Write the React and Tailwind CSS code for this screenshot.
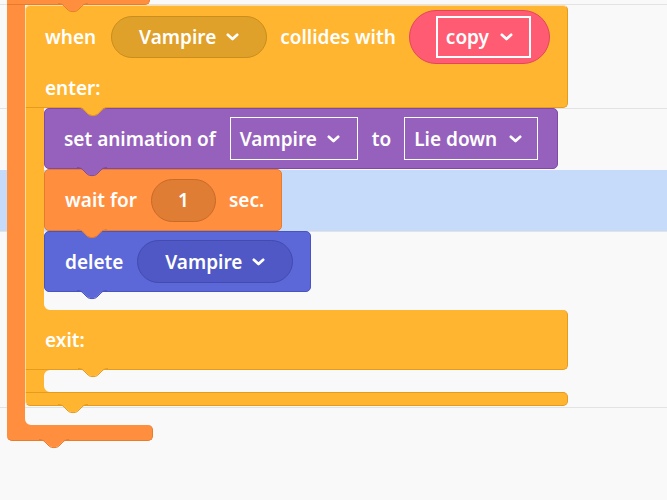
import React from "react";

const Y = "#ffb52f";
const O = "#ff8f3f";

function Chevron() {
  return (
    <svg width="13" height="8" viewBox="0 0 13 8" className="shrink-0">
      <polyline points="1.8,1.8 6.5,6 11.2,1.8" fill="none" stroke="white" strokeWidth="2.7" strokeLinecap="round" strokeLinejoin="round" />
    </svg>
  );
}

function Bump({ color, stroke, className }) {
  return (
    <svg width="30" height="10" viewBox="0 0 30 10" className={"absolute z-10 " + className}>
      <path d="M0 0 C4 0 5 1.5 8 4.5 L10.5 7 C12 8.5 18 8.5 19.5 7 L22 4.5 C25 1.5 26 0 30 0 Z" fill={color} />
      <path d="M0 0.5 C4 0.5 5 2 8 5 L10.5 7.5 C12 9 18 9 19.5 7.5 L22 5 C25 2 26 0.5 30 0.5" fill="none" stroke={stroke} strokeWidth="1" />
    </svg>
  );
}

function CornerBL({ color, className }) {
  return (
    <svg width="6" height="6" viewBox="0 0 6 6" className={"absolute " + className}>
      <path d="M0 0 L0 6 L6 6 A6 6 0 0 1 0 0 Z" fill={color} />
    </svg>
  );
}

function CornerTL({ color, className }) {
  return (
    <svg width="6" height="6" viewBox="0 0 6 6" className={"absolute " + className}>
      <path d="M0 0 L6 0 A6 6 0 0 0 0 6 Z" fill={color} />
    </svg>
  );
}

export default function App() {
  return (
    <div className="relative w-[667px] h-[500px] overflow-hidden bg-[#f9f9f9] font-['Noto_Sans','Open_Sans',sans-serif] text-white font-semibold text-[19px] leading-[24px]">
      {/* canvas rows */}
      <div className="flex flex-col">
        <div className="h-[4px]" />
        <div className="h-[104px] border-t border-[#e3e3e3]" />
        <div className="h-[62px] border-t border-[#e3e3e3]" />
        <div className="h-[61px] bg-[#c6dbf9]" />
        <div className="h-[176px] border-t border-[#e3e3e3]" />
        <div className="h-[93px] border-t border-[#e3e3e3]" />
      </div>

      {/* block stack */}
      <div className="absolute left-[7px] top-[-25px] flex flex-col items-start">
        {/* orange top arm */}
        <div className="relative w-[143px] h-[30px] bg-[#ff8f3f] rounded-br-[5px] border-r border-b border-[#e67d2e]">
          <Bump color={O} stroke="#e67d2e" className="left-[51px] top-full -mt-[1px]" />
        </div>

        <div className="flex">
          <div className="w-[18px] bg-[#ff8f3f]" />
          <div className="flex flex-col">
            {/* yellow C block */}
            <div className="flex flex-col w-[543px]">
              {/* header */}
              <div className="relative h-[103px] bg-[#ffb52f] rounded-t-[5px] rounded-br-[5px] border-t border-l border-t-[#ffdca0] border-l-[#ffdca0] border-r border-b border-r-[#e39c1e] border-b-[#e39c1e] pl-[19px] flex flex-col">
                <div className="h-[63px] flex items-center">
                  <span>when</span>
                  <div className="ml-[15px] w-[156px] h-[42px] rounded-full bg-[#e0a12b] border border-[#c98e1c] flex items-center justify-center gap-[10px]">
                    <span>Vampire</span>
                    <Chevron />
                  </div>
                  <span className="ml-[13px]">collides with</span>
                  <div className="ml-[13px] w-[141px] h-[54px] rounded-full bg-[#ff5c73] border border-[#e0475e] flex items-center pl-[26px]">
                    <div className="w-[95px] h-[42px] border-2 border-white flex items-center pl-[8px] gap-[11px]">
                      <span>copy</span>
                      <Chevron />
                    </div>
                  </div>
                </div>
                <div className="h-[39px] flex items-center">
                  <span>enter:</span>
                </div>
                <Bump color={Y} stroke="#e39c1e" className="left-[52px] top-full" />
              </div>

              {/* statements */}
              <div className="flex">
                <div className="w-[19px] bg-[#ffb52f] border-l border-[#ffdca0]" />
                <div className="flex flex-col">
                  {/* set animation */}
                  <div className="relative w-[514px] h-[61px] bg-[#9661bd] rounded-[5px] border border-[#7e4aa6] flex items-center pl-[19px]">
                    <span>set animation of</span>
                    <div className="ml-[14px] w-[128px] h-[43px] border-[1.5px] border-white flex items-center pl-[9px] gap-[10px]">
                      <span>Vampire</span>
                      <Chevron />
                    </div>
                    <span className="ml-[14px]">to</span>
                    <div className="ml-[13px] w-[134px] h-[43px] border-[1.5px] border-white flex items-center pl-[9px] gap-[12px]">
                      <span>Lie down</span>
                      <Chevron />
                    </div>
                    <Bump color="#9661bd" stroke="#7e4aa6" className="left-[32px] top-full -mt-[1px]" />
                  </div>
                  {/* wait */}
                  <div className="relative w-[238px] h-[62px] bg-[#ff8f3f] rounded-[5px] border border-[#e67d2e] flex items-center pl-[20px]">
                    <span>wait for</span>
                    <div className="ml-[14px] w-[65px] h-[43px] rounded-full bg-[#e07d35] border border-[#c96a27] flex items-center justify-center">
                      <span>1</span>
                    </div>
                    <span className="ml-[13px]">sec.</span>
                    <Bump color={O} stroke="#e67d2e" className="left-[32px] top-full -mt-[1px]" />
                  </div>
                  {/* delete */}
                  <div className="relative w-[267px] h-[61px] bg-[#5c67d8] rounded-[5px] border border-[#4a54c0] flex items-center pl-[20px]">
                    <span>delete</span>
                    <div className="ml-[14px] w-[156px] h-[43px] rounded-full bg-[#4f58c4] border border-[#434bb0] flex items-center justify-center gap-[10px]">
                      <span>Vampire</span>
                      <Chevron />
                    </div>
                    <Bump color="#5c67d8" stroke="#4a54c0" className="left-[32px] top-full -mt-[1px]" />
                  </div>
                  <div className="relative h-[18px]">
                    <CornerBL color={Y} className="left-0 bottom-0" />
                  </div>
                </div>
              </div>

              {/* exit */}
              <div className="relative h-[60px] bg-[#ffb52f] rounded-r-[5px] border-l border-l-[#ffdca0] border-r border-r-[#e39c1e] border-b border-b-[#e39c1e] pl-[19px] flex items-center">
                <span className="pt-[1px]">exit:</span>
                <Bump color={Y} stroke="#e39c1e" className="left-[52px] top-full -mt-[1px]" />
              </div>

              {/* empty mouth */}
              <div className="flex">
                <div className="w-[19px] bg-[#ffb52f] border-l border-[#ffdca0]" />
                <div className="relative h-[22px] flex-1">
                  <CornerTL color={Y} className="left-0 top-0" />
                  <CornerBL color={Y} className="left-0 bottom-0" />
                </div>
              </div>

              {/* yellow bottom arm */}
              <div className="relative h-[14px] bg-[#ffb52f] rounded-b-[5px] rounded-tr-[5px] border-l border-l-[#ffdca0] border-r border-b border-t border-r-[#e39c1e] border-b-[#e39c1e] border-t-[#e39c1e]">
                <Bump color={Y} stroke="#e39c1e" className="left-[32px] top-full -mt-[1px]" />
              </div>
            </div>

            {/* orange mouth remainder */}
            <div className="relative h-[19px]">
              <CornerBL color={O} className="left-0 bottom-0" />
            </div>
          </div>
        </div>

        {/* orange bottom arm */}
        <div className="relative w-[146px] h-[16px] bg-[#ff8f3f] rounded-b-[5px] rounded-tr-[5px] border-r border-b border-[#e67d2e]">
          <Bump color={O} stroke="#e67d2e" className="left-[32px] top-full -mt-[1px]" />
        </div>
      </div>
    </div>
  );
}
